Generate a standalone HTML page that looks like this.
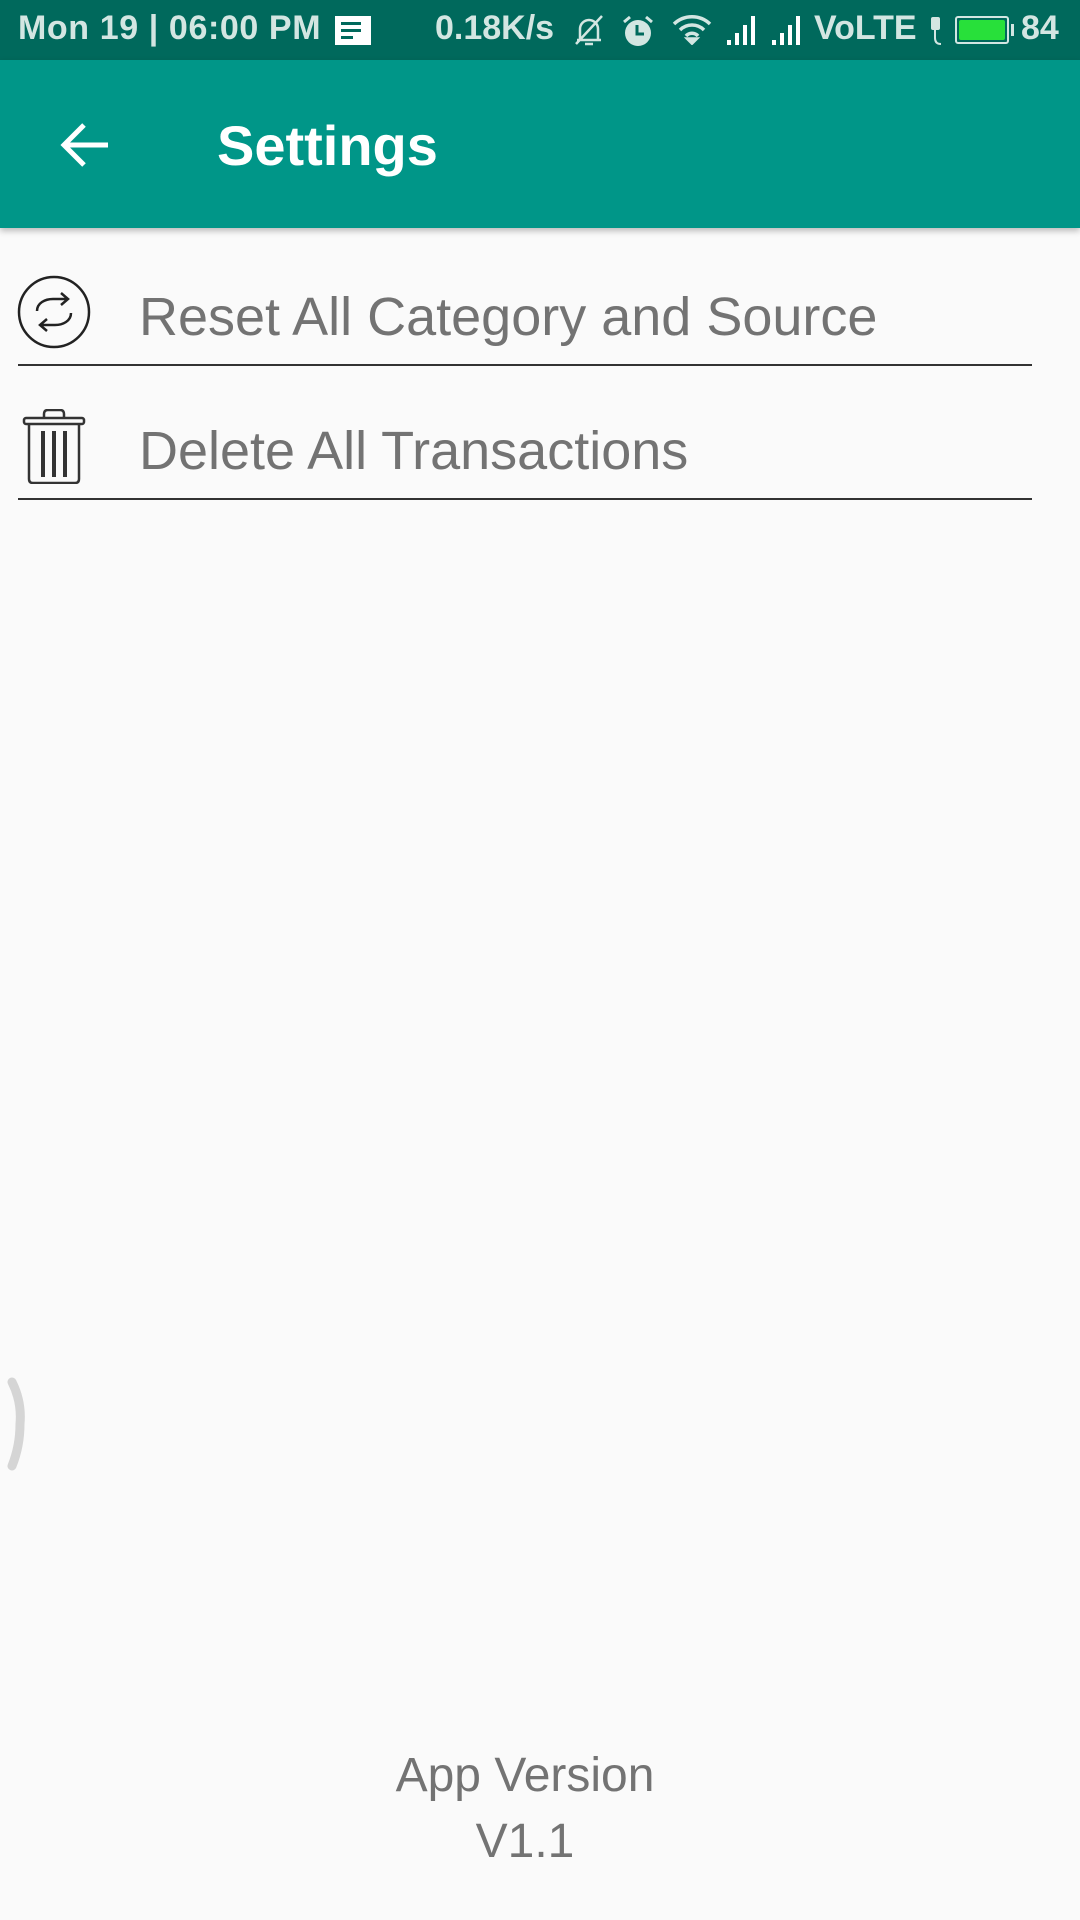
<!DOCTYPE html>
<html><head><meta charset="utf-8"><style>
*{margin:0;padding:0;box-sizing:border-box}
body{width:1080px;height:1920px;background:#fafafa;position:relative;overflow:hidden;font-family:"Liberation Sans",Roboto,sans-serif}
.sb{position:absolute;left:0;top:0;width:1080px;height:60px;background:#00695c;color:#d3e6e2;font-weight:bold;font-size:34px}
.sb span{position:absolute;top:9px;white-space:nowrap}
.tb{position:absolute;left:0;top:60px;width:1080px;height:168px;background:#009688;box-shadow:0 3px 6px rgba(0,0,0,.25)}
.title{position:absolute;left:217px;top:113px;font-size:56px;font-weight:bold;color:#fff}
.item{position:absolute;left:139px;font-size:54px;color:#737373;white-space:nowrap}
.div{position:absolute;left:18px;width:1014px;height:2px;background:#333}
.ver{position:absolute;left:0;width:1050px;text-align:center;font-size:48px;color:#737373}
</style></head><body>
<div class="sb">
<span style="left:18px;letter-spacing:0.6px">Mon 19 | 06:00 PM</span>
<div style="position:absolute;left:335px;top:16px;width:36px;height:29px;background:#fff"></div>
<div style="position:absolute;left:341px;top:22px;width:20px;height:3px;background:#00695c"></div>
<div style="position:absolute;left:341px;top:29px;width:20px;height:3px;background:#00695c"></div>
<div style="position:absolute;left:341px;top:36px;width:12px;height:3px;background:#00695c"></div>
<span style="left:435px">0.18K/s</span>
<svg style="position:absolute;left:572px;top:14px" width="34" height="34" viewBox="0 0 34 34" fill="none" stroke="#d3e6e2" stroke-width="2.5"><path d="M8 26V15a9 9 0 0 1 18 0v11H5h24M13 30h8M4 30L30 2"/></svg>
<svg style="position:absolute;left:620px;top:14px" width="36" height="34" viewBox="0 0 36 34"><circle cx="18" cy="19" r="13" fill="#d3e6e2"/><path d="M4 8l6-5M32 8l-6-5" stroke="#d3e6e2" stroke-width="3"/><path d="M17 11v9h7" stroke="#00695c" stroke-width="3" fill="none"/></svg>
<svg style="position:absolute;left:672px;top:15px" width="40" height="30" viewBox="0 0 40 30" fill="none" stroke="#d3e6e2" stroke-width="3.5"><path d="M2 9a26 26 0 0 1 36 0M8 15a17 17 0 0 1 24 0M14 21a8 8 0 0 1 12 0"/><path d="M16 24l4 4 4-4z" fill="#d3e6e2"/></svg>
<svg style="position:absolute;left:726px;top:14px" width="82" height="32" viewBox="0 0 82 32" fill="#fff"><rect x="1" y="26" width="4" height="5"/><rect x="9" y="19" width="4" height="12"/><rect x="17" y="11" width="4" height="20"/><rect x="25" y="2" width="4" height="29"/><rect x="46" y="26" width="4" height="5"/><rect x="54" y="19" width="4" height="12"/><rect x="62" y="11" width="4" height="20"/><rect x="70" y="2" width="4" height="29"/></svg>
<span style="left:814px">VoLTE</span>
<svg style="position:absolute;left:928px;top:14px" width="16" height="32" viewBox="0 0 16 32"><rect x="3" y="3" width="9" height="13" rx="2" fill="#d3e6e2"/><path d="M7 16v8q0 6 6 6" stroke="#d3e6e2" stroke-width="2" fill="none"/></svg>
<div style="position:absolute;left:955px;top:16px;width:54px;height:28px;border:2px solid #d3e6e2;border-radius:3px;padding:2px"><div style="width:100%;height:100%;background:#28e03a;border-radius:2px"></div></div>
<div style="position:absolute;left:1011px;top:24px;width:3px;height:12px;background:#d3e6e2"></div>
<span style="left:1021px">84</span>
</div>
<div class="tb">
<svg style="position:absolute;left:58px;top:60px" width="54" height="50" viewBox="0 0 54 50" fill="none" stroke="#fff" stroke-width="5"><path d="M50 25H8M26 5L6 25l20 20"/></svg>
</div>
<div class="title">Settings</div>
<svg style="position:absolute;left:17px;top:275px" width="74" height="74" viewBox="0 0 74 74" fill="none" stroke="#222" stroke-width="2.5"><circle cx="37" cy="37" r="35"/><path d="M20 36c0-8 8-12 16-12h14M44 18l7 6-7 6"/><path d="M54 38c0 8-8 12-16 12H24M30 44l-7 6 7 6"/></svg>
<div class="item" style="top:286px">Reset All Category and Source</div>
<div class="div" style="top:364px"></div>
<svg style="position:absolute;left:22px;top:409px" width="64" height="75" viewBox="0 0 64 75" fill="none" stroke="#333" stroke-width="2.5"><path d="M22 9V5q0-4 4-4h12q4 0 4 4v4"/><rect x="2" y="9" width="60" height="6" rx="2"/><path d="M7 15v55q0 4 4 4h42q4 0 4-4V15"/><path d="M21 22v46M32 22v46M43 22v46" stroke-width="4"/></svg>
<div class="item" style="top:420px">Delete All Transactions</div>
<div class="div" style="top:498px"></div>
<svg style="position:absolute;left:0;top:1370px" width="40" height="115" viewBox="0 0 40 115"><path d="M12 12q10 20 8 42q0 22-8 42" stroke="#d5d5d5" stroke-width="9" stroke-linecap="round" fill="none"/></svg>
<div class="ver" style="top:1748px">App Version</div>
<div class="ver" style="top:1814px">V1.1</div>
</body></html>
